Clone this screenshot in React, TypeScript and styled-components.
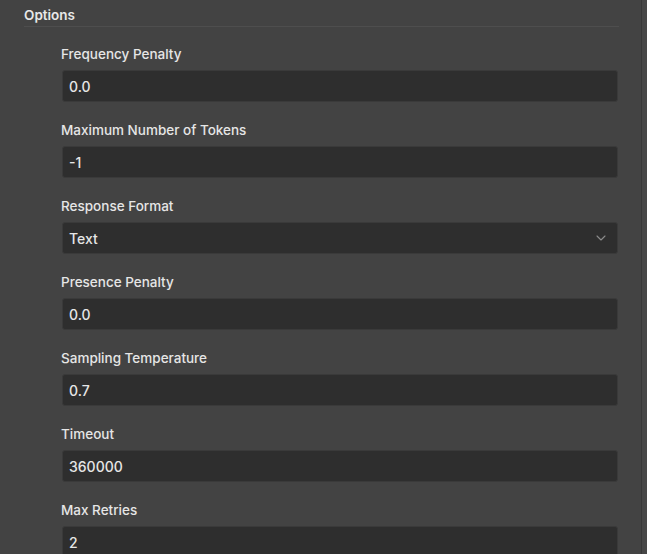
import styled, { createGlobalStyle } from "styled-components";
import { ChevronDown } from "lucide-react";

const fields: { label: string; value: string; select?: boolean }[] = [
  { label: "Frequency Penalty", value: "0.0" },
  { label: "Maximum Number of Tokens", value: "-1" },
  { label: "Response Format", value: "Text", select: true },
  { label: "Presence Penalty", value: "0.0" },
  { label: "Sampling Temperature", value: "0.7" },
  { label: "Timeout", value: "360000" },
  { label: "Max Retries", value: "2" },
];

const App = () => {
  return (
    <>
      <GlobalStyle />
      <Page>
        <Panel>
          <Header>Options</Header>
          <Fields>
            {fields.map((field) => (
              <Field key={field.label}>
                <Label>{field.label}</Label>
                <InputBox>
                  <span>{field.value}</span>
                  {field.select && <ChevronDown size={16} strokeWidth={1.6} />}
                </InputBox>
              </Field>
            ))}
          </Fields>
        </Panel>
        <SideStrip />
      </Page>
    </>
  );
};

const GlobalStyle = createGlobalStyle`
  body {
    margin: 0;
    background: #434343;
    font-family: Inter, "Noto Sans", sans-serif;
    overflow: hidden;
  }
`;

const Page = styled.div`
  display: flex;
  height: 554px;
`;

const Panel = styled.div`
  width: 642px;
  box-sizing: border-box;
  padding: 0 22px 0 24px;
  background: #434343;
  border-right: 1px solid #383838;
`;

const SideStrip = styled.div`
  flex: 1;
  background: #474747;
`;

const Header = styled.div`
  margin-top: 5px;
  padding-bottom: 1px;
  line-height: 20px;
  font-size: 13.5px;
  font-weight: 600;
  color: #e8e8e8;
  border-bottom: 1px solid #4e4e4e;
`;

const Fields = styled.div`
  display: flex;
  flex-direction: column;
  gap: 18px;
  padding: 17px 1px 0 38px;
`;

const Field = styled.div`
  display: flex;
  flex-direction: column;
  gap: 6px;
`;

const Label = styled.div`
  margin-left: -1px;
  line-height: 20px;
  font-size: 13.5px;
  font-weight: 500;
  color: #e6e6e6;
`;

const InputBox = styled.div`
  height: 32px;
  box-sizing: border-box;
  display: flex;
  align-items: center;
  justify-content: space-between;
  padding: 0 8px 0 6px;
  background: #2e2e2e;
  border: 1px solid #3a3a3a;
  border-radius: 3px;
  font-size: 14px;
  font-weight: 500;
  color: #e6e6e6;
  svg {
    color: #8c8c8c;
  }
`;

export default App;
